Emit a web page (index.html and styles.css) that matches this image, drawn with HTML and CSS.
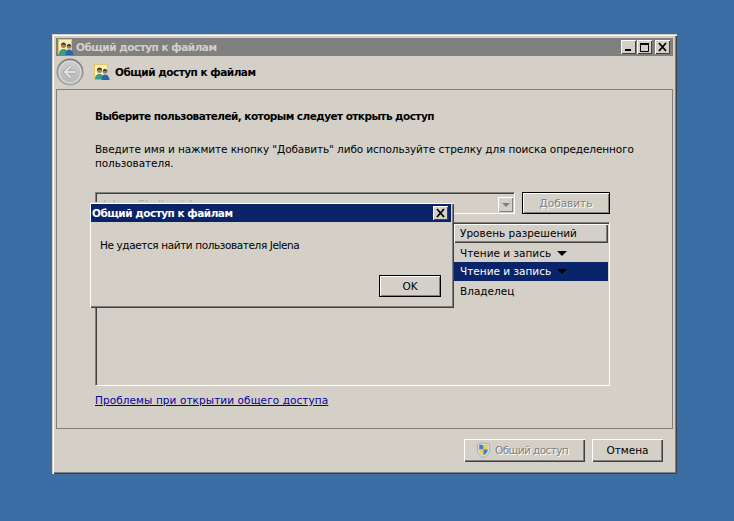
FILE: index.html
```html
<!DOCTYPE html>
<html lang="ru">
<head>
    <meta charset="UTF-8">
    <meta name="viewport" content="width=device-width, initial-scale=1.0">
    <title>Общий доступ к файлам</title>
    <link rel="stylesheet" href="styles.css">
</head>
<body>
    <div class="window">
        <div class="titlebar inactive">
            <svg class="users-icon" viewBox="0 0 16 16"><use href="#users"/></svg>
            <span class="title-text">Общий доступ к файлам</span>
            <div class="caption-buttons">
                <span class="cap-btn"><svg viewBox="0 0 12 10"><rect x="2" y="7" width="6" height="2" fill="#000"/></svg></span>
                <span class="cap-btn cap-max"><svg viewBox="0 0 12 10"><path d="M1.5 1.500h8v8h-8z" fill="none" stroke="#000"/><rect x="1" y="1" width="9" height="2" fill="#000"/></svg></span>
                <span class="cap-btn cap-close"><svg viewBox="0 0 12 10"><path d="M2 1l7 8M9 1l-7 8" stroke="#000" stroke-width="1.8" fill="none"/></svg></span>
            </div>
        </div>

        <div class="navbar">
            <svg class="back-btn" width="28" height="28" viewBox="0 0 28 28">
                <defs>
                    <linearGradient id="backfill" x1="0" y1="0" x2="0" y2="1">
                        <stop offset="0" stop-color="#cdcdcd"/>
                        <stop offset="1" stop-color="#b8b8b8"/>
                    </linearGradient>
                    <linearGradient id="backring" x1="0" y1="0" x2="0" y2="1">
                        <stop offset="0" stop-color="#7c7c7c"/>
                        <stop offset="1" stop-color="#a8a8a8"/>
                    </linearGradient>
                </defs>
                <circle cx="14" cy="14" r="13.500" fill="url(#backring)"/>
                <circle cx="14" cy="14" r="11" fill="url(#backfill)" stroke="#d8d8d8" stroke-width="1.500"/>
                <path d="M14.500 8.500l-5.500 5.500 5.500 5.500M9.500 14h10" fill="none" stroke="#a4a4a4" stroke-width="3.600"/>
                <path d="M14.500 8.500l-5.500 5.500 5.500 5.500M9.500 14h10" fill="none" stroke="#e2e2e2" stroke-width="2"/>
            </svg>
            <svg class="users-icon" viewBox="0 0 16 16">
                <g id="users">
                    <rect x="0.500" y="0.500" width="13" height="14" fill="#f9eeb4" stroke="#e2c868"/>
                    <circle cx="5.500" cy="6.500" r="2.500" fill="#a88258"/>
                    <path d="M3 6.500c0-4 5-4 5 0-1-1.500-4-1.500-5 0z" fill="#3a3324"/>
                    <path d="M1 15.500c0-4 2-5.500 4.500-5.500s4.500 1.500 4.500 5.500z" fill="#3a9c8c"/>
                    <circle cx="11" cy="7.500" r="2.200" fill="#9c7850"/>
                    <path d="M8.800 7.500c0-3.500 4.400-3.500 4.400 0-1-1.200-3.400-1.200-4.400 0z" fill="#2c2a24"/>
                    <path d="M7.500 16c0-3.500 1.500-5.500 3.500-5.500s4.500 2 4.500 5.500z" fill="#2a64b0"/>
                </g>
            </svg>
            <span class="nav-title">Общий доступ к файлам</span>
        </div>

        <div class="panel">
            <h1 class="heading">Выберите пользователей, которым следует открыть доступ</h1>
            <p class="intro">Введите имя и нажмите кнопку "Добавить" либо используйте стрелку для поиска определенного<br>пользователя.</p>

            <div class="add-row">
                <div class="combo">
                    <span class="combo-text">Jelena Shalbanich</span>
                    <span class="combo-arrow"><i class="arrow-disabled"></i></span>
                </div>
                <button class="btn btn-add" disabled>Добавить</button>
            </div>

            <div class="user-list">
                <div class="list-header">
                    <div class="col-level">Уровень разрешений</div>
                </div>
                <div class="list-row"><div class="col-level">Чтение и запись <i class="arrow"></i></div></div>
                <div class="list-row selected"><div class="col-level">Чтение и запись <i class="arrow"></i></div></div>
                <div class="list-row"><div class="col-level">Владелец</div></div>
            </div>

            <a class="help-link" href="#">Проблемы при открытии общего доступа</a>
        </div>

        <div class="footer">
            <button class="btn btn-share" disabled>
                <svg width="15" height="16" viewBox="0 0 16 17">
                    <path d="M8 .5l6.500 2v6c0 4-3 6.500-6.500 8-3.500-1.500-6.500-4-6.500-8v-6z" fill="#d8d8d8" stroke="#a9a9a9"/>
                    <path d="M8 3H3.500v5H8z" fill="#3f7fc4"/>
                    <path d="M8 3h4.500v5H8z" fill="#f0cd52"/>
                    <path d="M8 8H3.500c0 3 2 5 4.500 6z" fill="#f0cd52"/>
                    <path d="M8 8h4.500c0 3-2 5-4.500 6z" fill="#3f7fc4"/>
                </svg>
                <span>Общий доступ</span>
            </button>
            <button class="btn btn-cancel">Отмена</button>
        </div>

        <div class="dialog">
            <div class="dialog-title">
                <span>Общий доступ к файлам</span>
                <span class="cap-btn"><svg viewBox="0 0 12 10"><path d="M2 1l7 8M9 1l-7 8" stroke="#000" stroke-width="1.8" fill="none"/></svg></span>
            </div>
            <p class="dialog-msg">Не удается найти пользователя Jelena</p>
            <div class="dialog-actions">
                <button class="btn btn-ok">OK</button>
            </div>
        </div>
    </div>
</body>
</html>
```

FILE: styles.css
```css
* {
    box-sizing: border-box;
}
body {
    margin: 0;
    height: 521px;
    overflow: hidden;
    background-color: #3a6ea5;
    font-family: "DejaVu Sans", sans-serif;
    font-size: 10.5px;
    color: #000;
}
.window {
    position: relative;
    display: flex;
    flex-direction: column;
    width: 625px;
    height: 440px;
    margin: 34px 0 0 52px;
    padding: 4px;
    background-color: #d4d0c8;
    box-shadow: inset 1px 1px 0 #d4d0c8, inset 2px 2px 0 #fff, inset -1px -1px 0 #404040, inset -2px -2px 0 #808080;
}
.titlebar {
    display: flex;
    align-items: center;
    flex: 0 0 18px;
    padding-left: 2px;
    gap: 2px;
    background-color: #808080;
    color: #d4d0c8;
    font-weight: 700;
    letter-spacing: -0.5px;
}
.users-icon {
    width: 16px;
    height: 16px;
    flex: none;
}
.caption-buttons {
    display: flex;
    margin-left: auto;
    margin-right: 3px;
}
.cap-btn {
    display: flex;
    align-items: center;
    justify-content: center;
    width: 15px;
    height: 14px;
    padding-left: 1px;
    background-color: #d4d0c8;
    box-shadow: inset 1px 1px 0 #fff, inset -1px -1px 0 #404040;
}
.cap-btn svg {
    width: 12px;
    height: 10px;
}
.cap-max {
    margin-left: 1px;
}
.cap-close {
    margin-left: 3px;
}
.navbar {
    display: flex;
    align-items: center;
    flex: 0 0 33px;
    padding-bottom: 2px;
}
.navbar .users-icon {
    margin-left: 10px;
}
.nav-title {
    margin-left: 5px;
    font-weight: 700;
    letter-spacing: -0.5px;
}
.panel {
    flex: 0 0 340px;
    width: 617px;
    padding: 20px 38px 0;
    border: 1px solid #808080;
}
.heading {
    margin: 0;
    font-size: 10.5px;
    font-weight: 700;
    line-height: 13px;
    letter-spacing: -0.55px;
}
.intro {
    margin: 19px 0 0;
    line-height: 14px;
    letter-spacing: -0.1px;
    white-space: nowrap;
}
.add-row {
    display: flex;
    gap: 7px;
    margin-top: 22px;
}
.combo {
    display: flex;
    align-items: center;
    justify-content: space-between;
    width: 420px;
    height: 22px;
    padding: 1px;
    border: 1px solid #fff;
    border-top-color: #808080;
    border-left-color: #808080;
    box-shadow: inset 1px 1px 0 #404040;
}
.combo-text {
    padding: 1px 0 0 6px;
    color: #a8a8a8;
}
.combo-arrow {
    display: flex;
    align-items: center;
    justify-content: center;
    align-self: flex-end;
    width: 15px;
    height: 15px;
    box-shadow: inset 1px 1px 0 #fff, inset -1px -1px 0 #808080;
}
.arrow-disabled {
    border-style: solid;
    border-width: 4px 4px 0;
    border-color: #808080 transparent transparent;
}
.btn {
    padding: 0;
    background-color: #d4d0c8;
    border: none;
    font-family: inherit;
    font-size: 10.5px;
    color: #000;
    box-shadow: inset 1px 1px 0 #fff, inset -1px -1px 0 #404040, inset -2px -2px 0 #808080;
}
.btn:disabled {
    color: #808080;
    text-shadow: 1px 1px 0 #fff;
}
.btn-add {
    width: 88px;
    height: 22px;
    box-shadow: 0 0 0 1px #000 inset, inset 2px 2px 0 #fff, inset -2px -2px 0 #808080;
}
.user-list {
    display: flex;
    flex-direction: column;
    align-items: flex-end;
    width: 515px;
    height: 164px;
    margin-top: 8px;
    padding: 1px;
    border: 1px solid #fff;
    border-top-color: #808080;
    border-left-color: #808080;
    box-shadow: inset 1px 1px 0 #404040;
}
.list-header,
.list-row {
    display: flex;
    align-items: center;
    justify-content: flex-end;
    width: 100%;
    height: 19px;
}
.col-level {
    width: 154px;
    padding-left: 6px;
}
.list-header .col-level {
    height: 19px;
    line-height: 19px;
    background-color: #d4d0c8;
    box-shadow: inset 1px 1px 0 #fff, inset -1px -1px 0 #404040, inset -2px -2px 0 #808080;
}
.list-row.selected .col-level {
    height: 19px;
    line-height: 19px;
    background-color: #0a246a;
    color: #fff;
}
.arrow {
    display: inline-block;
    margin-left: 3px;
    vertical-align: 1px;
    border-style: solid;
    border-width: 5px 5px 0;
    border-color: #000 transparent transparent;
}
.help-link {
    display: block;
    margin-top: 8px;
    color: #00009c;
    letter-spacing: 0.08px;
}
.footer {
    display: flex;
    justify-content: flex-end;
    gap: 7px;
    padding: 10px 10px 0 0;
}
.btn-share,
.btn-cancel {
    height: 23px;
    padding-bottom: 1px;
}
.btn-share {
    display: flex;
    align-items: center;
    gap: 4px;
    width: 121px;
    padding-left: 12px;
    letter-spacing: -0.6px;
}
.btn-cancel {
    width: 71px;
}
.dialog {
    position: absolute;
    left: 37px;
    top: 168px;
    width: 365px;
    height: 106px;
    padding: 2px 3px 3px 2px;
    background-color: #d4d0c8;
    box-shadow: inset 1px 1px 0 #d4d0c8, inset 2px 2px 0 #fff, inset -1px -1px 0 #404040, inset -2px -2px 0 #808080;
}
.dialog-title {
    display: flex;
    align-items: center;
    justify-content: space-between;
    height: 18px;
    padding: 0 3px 0 1px;
    background-color: #0a246a;
    color: #fff;
    font-weight: 700;
    letter-spacing: -0.5px;
}
.dialog-msg {
    margin: 16px 0 0 9px;
    line-height: 14px;
    letter-spacing: -0.4px;
}
.dialog-actions {
    display: flex;
    justify-content: flex-end;
    margin-top: 23px;
    padding-right: 10px;
}
.btn-ok {
    width: 62px;
    height: 22px;
    box-shadow: 0 0 0 1px #000 inset, inset 2px 2px 0 #fff, inset -2px -2px 0 #808080;
}
```
